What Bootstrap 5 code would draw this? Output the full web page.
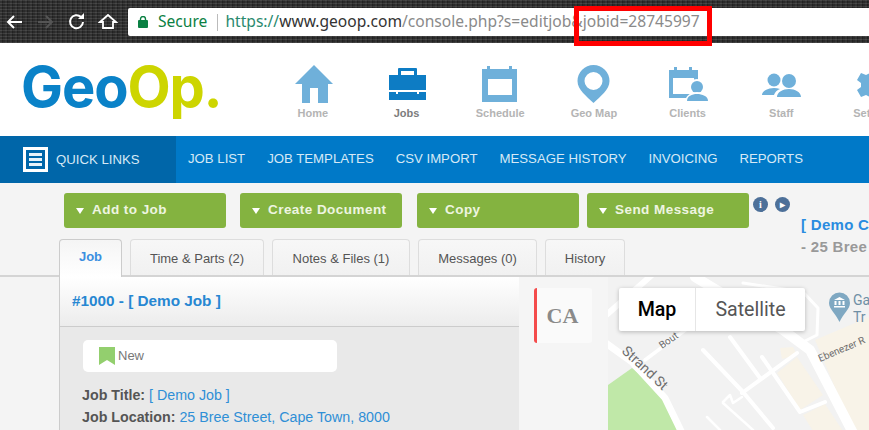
<!DOCTYPE html>
<html lang="en">
<head>
    <meta charset="UTF-8">
    <title>GeoOp - Job</title>
    <link href="https://cdn.jsdelivr.net/npm/bootstrap@5.3.0/dist/css/bootstrap.min.css" rel="stylesheet">
    <style>
        html, body { height: 430px; overflow: hidden; }
        body { font-family: "Liberation Sans", Arial, sans-serif; background: #f4f4f4; color: #555; }

        /* browser toolbar */
        .chrome-bar { height: 43px; padding: 8px 0 7px 0; background: repeating-linear-gradient(0deg, rgba(255,255,255,.07) 0 1px, rgba(0,0,0,.12) 1px 3px), repeating-linear-gradient(90deg, #3a3a3a 0 2px, #262626 2px 3px, #303030 3px 5px); position: relative; }
        .chrome-tools { width: 128px; flex: none; }
        .url-box { flex: 1; background: #fff; border-radius: 2px 0 0 2px; font-family: "Noto Sans", sans-serif; font-size: 15.6px; padding-left: 10px; white-space: nowrap; overflow: hidden; }
        .url-secure { color: #0b8043; margin-left: 10px; }
        .url-sep { width: 1px; height: 17px; background: #bbb; margin: 0 7px 0 10px; }
        .url-scheme { color: #2a8a6e; }
        .url-host { color: #333; }
        .url-rest { color: #8a8a8a; }
        .red-frame { position: absolute; left: 574px; top: 6px; width: 138px; height: 40px; border: 5px solid #f00; }

        /* logo + main icons */
        .app-head { height: 93px; background: #fff; overflow: hidden; }
        .logo-cell { width: 266px; flex: none; padding: 0 0 6px 21px; font-family: "Inter", sans-serif; font-weight: 700; font-size: 56px; letter-spacing: -1.1px; line-height: 1; }
        .logo-geo { color: #0a82c8; }
        .logo-op { color: #cdd500; }
        .head-item { width: 93.7px; flex: none; text-align: center; font-size: 11px; font-weight: 700; color: #b4b4b4; padding-top: 21px; }
        .head-item svg { display: block; margin: 0 auto -1px; height: 42px; width: 46px; fill: #6fb0da; }
        .head-item.on { color: #7c7c7c; }
        .head-item.on svg { fill: #0d7cc4; }

        /* blue nav */
        .blue-nav { height: 47px; background: #0079c8; font-size: 13.2px; color: #d6e9f6; }
        .quick-cell { width: 176px; flex: none; background: #0066a9; padding-left: 23px; gap: 8px; }
        .quick-box { width: 25px; height: 25px; border: 3px solid #fff; background: #0066a9; padding: 3px; display: flex; flex-direction: column; justify-content: space-between; }
        .quick-box i { display: block; height: 3px; background: #e8f2f9; }
        .blue-links { gap: 22px; padding: 0 0 1px 12px; }

        /* action buttons */
        .action-row { padding: 10px 0 0 64px; height: 56px; white-space: nowrap; }
        .act-btn { width: 162px; height: 35px; flex: none; background: #84b340; border: 0; border-radius: 3px; color: #eef5e0; font-weight: 700; font-size: 13.5px; letter-spacing: .45px; text-align: left; padding: 0 0 0 12px; display: flex; align-items: center; gap: 8px; }
        .act-btn::before { content: ""; border-left: 4px solid transparent; border-right: 4px solid transparent; border-top: 6px solid #fff; margin-top: 1px; }
        .gap-add { margin-right: 14px; }
        .gap-doc { margin-right: 15px; }
        .gap-copy { margin-right: 8px; }
        .round-ico { width: 15px; height: 15px; border-radius: 50%; background: #4d7099; color: #fff; font: bold 10px/15px "Liberation Serif", serif; text-align: center; }
        .round-row { gap: 7px; padding: 4px 0 0 4px; flex: none; }
        .demo-side { margin: 21px 0 0 11px; font-weight: 700; font-size: 15px; line-height: 22px; letter-spacing: .3px; }
        .demo-side div:first-child { color: #2a8ce0; }
        .demo-side div:last-child { color: #999; }

        /* tabs */
        .job-tabs { padding-left: 59px; gap: 8px; height: 38px; border-bottom: 2px solid #d4d4d4; font-size: 13px; }
        .job-tab { height: 36px; border: 1px solid #ddd; border-bottom: 0; border-radius: 4px 4px 0 0; background: linear-gradient(#f7f7f7, #f1f1f1); color: #555; padding: 0; text-align: center; line-height: 38px; flex: none; }
        .job-tab.on { height: 38px; margin-bottom: -2px; background: linear-gradient(#f5f5f5, #fff); border-color: #ccc; color: #3b8fe0; font-weight: 700; line-height: 34px; font-size: 13px; }
        .tab-w1 { width: 63px; }
        .tab-w2 { width: 134px; }
        .tab-w3 { width: 138px; }
        .tab-w4 { width: 119px; }
        .tab-w5 { width: 80px; }

        /* panels */
        .work-area { height: 154px; }
        .job-panel { margin-left: 59px; width: 460px; flex: none; border-left: 1px solid #ccc; background: #e9e9e9; overflow: hidden; }
        .job-title-bar { height: 50px; background: linear-gradient(#fff, #ececec); border-bottom: 1px solid #ccc; padding: 13px 0 0 12px; font-size: 15.3px; font-weight: 700; color: #2787d2; }
        .job-body { padding: 13px 0 0 22px; font-size: 14.25px; line-height: 22px; color: #555; white-space: nowrap; }
        .state-pill { width: 254px; height: 32px; background: #fff; border-radius: 5px; padding-left: 16px; gap: 3px; font-size: 13px; color: #777; margin: 0 0 12px 1px; }
        .state-flag { width: 16px; height: 18px; background: #93cf6e; clip-path: polygon(0 0, 100% 0, 100% 100%, 50% 72%, 0 100%); }
        .job-body a { color: #2f8fd6; text-decoration: none; }
        .map-side { width: 89px; flex: none; background: #f5f5f5; padding: 11px 0 0 15px; }
        .ca-card { width: 58px; height: 55px; background: #fafafa; border-left: 3px solid #f44b4b; border-radius: 3px; padding-right: 4px; font: bold 22px/55px "Liberation Serif", serif; color: #8a8a8a; text-align: center; }
        .map-wrap { flex: 1; position: relative; overflow: hidden; background: #f2f2f2; }
        .map-wrap svg { display: block; }
        .map-switch { position: absolute; left: 11px; top: 11px; height: 43px; background: #fff; border-radius: 2px; box-shadow: 0 1px 4px rgba(0,0,0,.25); font-family: Roboto, sans-serif; font-size: 19.6px; }
        .map-switch div { line-height: 43px; text-align: center; }
        .map-btn-a { width: 77px; color: #000; font-weight: 500; border-right: 1px solid #e6e6e6; }
        .map-btn-b { width: 109px; color: #565656; }
    </style>
</head>
<body>
    <!-- Browser toolbar -->
    <div class="chrome-bar d-flex">
        <div class="chrome-tools">
            <svg width="128" height="28" viewBox="0 0 128 28" fill="none" stroke="#fff" stroke-width="2">
                <path d="M22 14H9M14 8l-6 6 6 6"/>
                <path d="M38 14h13M46 8l6 6-6 6" stroke="#555"/>
                <path d="M83 14a6.5 6.5 0 1 1-2-5"/>
                <path d="M84 5v6h-6" fill="#fff" stroke="none"/>
                <path d="M100 14l8-7 8 7h-3v6h-10v-6z" stroke-width="1.8"/>
            </svg>
        </div>
        <div class="url-box d-flex align-items-center">
            <svg width="10" height="12" viewBox="0 0 10 12"><rect y="4" width="10" height="8" rx="1" fill="#0b8043"/><path d="M2.5 5V3a2.5 2.5 0 0 1 5 0v2" fill="none" stroke="#0b8043" stroke-width="1.4"/></svg>
            <span class="url-secure">Secure</span>
            <span class="url-sep"></span>
            <span><span class="url-scheme">https://</span><span class="url-host">www.geoop.com</span><span class="url-rest">/console.php?s=editjob&amp;jobid=28745997</span></span>
        </div>
        <div class="red-frame"></div>
    </div>

    <!-- Logo and main icons -->
    <div class="app-head d-flex">
        <div class="logo-cell d-flex align-items-center"><span class="logo-geo">Geo</span><span class="logo-op">Op.</span></div>
        <div class="head-item"><svg viewBox="0 0 46 42"><path d="M24 1 43 20H38V39H28V24H20V39H12V20H5z"/></svg>Home</div>
        <div class="head-item on"><svg viewBox="0 0 46 42"><path fill-rule="evenodd" d="M15 4h17a1 1 0 0 1 1 1v6h9v15H5V11h9V5a1 1 0 0 1 1-1zm2 3v4h13V7zM5 28h7v2h2v-2h19v2h2v-2h7v8H5z"/></svg>Jobs</div>
        <div class="head-item"><svg viewBox="0 0 46 42"><path fill-rule="evenodd" d="M5 5h5V2h3v3h19V2h3v3h5v33H5zm6 10v16h24V15z"/></svg>Schedule</div>
        <div class="head-item"><svg viewBox="0 0 46 42"><path fill-rule="evenodd" d="M22.500 1a16 16 0 0 1 16 16c0 9-9 15-16 22C15.500 32 6.500 26 6.500 17a16 16 0 0 1 16-16zm0 7a9 9 0 1 0 0 18 9 9 0 0 0 0-18z"/></svg>Geo Map</div>
        <div class="head-item"><svg viewBox="0 0 46 42"><path fill-rule="evenodd" d="M4 6h5V3h3v3h12V3h3v3h6v28H4zm4 8v16h21V14z"/><circle cx="32" cy="23" r="8" fill="#fff"/><circle cx="32" cy="23" r="6"/><path d="M20 38c0-6 6-10 12-10s12 4 12 10z" fill="#fff"/><path d="M22 37c0-5 5-7 10-7s11 2 11 7z"/></svg>Clients</div>
        <div class="head-item"><svg viewBox="0 0 46 42"><circle cx="16" cy="16" r="6.500"/><circle cx="31" cy="17" r="7"/><path d="M4 31c0-4 6-7 12-7 2 0 4 .3 6 1-3 1-5 3-6 6zM19 33c0-5 6-8 12-8s12 3 12 8z"/></svg>Staff</div>
        <div class="head-item"><svg viewBox="0 0 46 42"><path fill-rule="evenodd" d="M19 4h8l1 5 4 2 5-2 4 7-4 3v4l4 3-4 7-5-2-4 2-1 5h-8l-1-5-4-2-5 2-4-7 4-3v-4l-4-3 4-7 5 2 4-2zm4 11a6 6 0 1 0 0 12 6 6 0 0 0 0-12z"/></svg>Settings</div>
    </div>

    <!-- Blue navigation -->
    <div class="blue-nav d-flex">
        <div class="quick-cell d-flex align-items-center">
            <div class="quick-box"><i></i><i></i><i></i></div>
            <span>QUICK LINKS</span>
        </div>
        <div class="blue-links d-flex align-items-center">
            <span>JOB LIST</span>
            <span>JOB TEMPLATES</span>
            <span>CSV IMPORT</span>
            <span>MESSAGE HISTORY</span>
            <span>INVOICING</span>
            <span>REPORTS</span>
        </div>
    </div>

    <!-- Action buttons -->
    <div class="action-row d-flex">
        <button class="act-btn gap-add">Add to Job</button>
        <button class="act-btn gap-doc">Create Document</button>
        <button class="act-btn gap-copy">Copy</button>
        <button class="act-btn">Send Message</button>
        <div class="round-row d-flex">
            <div class="round-ico">i</div>
            <div class="round-ico">&#9656;</div>
        </div>
        <div class="demo-side">
            <div>[ Demo C</div>
            <div>- 25 Bree</div>
        </div>
    </div>

    <!-- Tabs -->
    <div class="job-tabs d-flex">
        <div class="job-tab on tab-w1">Job</div>
        <div class="job-tab tab-w2">Time &amp; Parts (2)</div>
        <div class="job-tab tab-w3">Notes &amp; Files (1)</div>
        <div class="job-tab tab-w4">Messages (0)</div>
        <div class="job-tab tab-w5">History</div>
    </div>

    <div class="work-area d-flex">
        <div class="job-panel">
            <div class="job-title-bar">#1000 - [ Demo Job ]</div>
            <div class="job-body">
                <div class="state-pill d-flex align-items-center"><span class="state-flag"></span>New</div>
                <div><b>Job Title:</b> <a href="#">[ Demo Job ]</a></div>
                <div><b>Job Location:</b> <a href="#">25 Bree Street, Cape Town, 8000</a></div>
            </div>
        </div>
        <div class="map-side"><div class="ca-card">CA</div></div>
        <div class="map-wrap">
            <svg width="261" height="154" viewBox="0 0 261 154">
                <polygon points="207,63 261,40 261,154 245,154" fill="#f8f3e8"/>
                <polygon points="169,96 189,80 215,118 192,133" fill="#f8f3e8"/>
                <polygon points="172,71 185,70 189,78 174,82" fill="#f8f3e8"/>
                <polygon points="195,138 217,127 235,154 205,154" fill="#f8f3e8"/>
                <polygon points="0,108 24,91 59,121 70,154 0,154" fill="#c0e8a8"/>
                <g fill="none" stroke="#fff" stroke-linecap="round" stroke-linejoin="round">
                    <path d="M-5 64 24 85 57 121 74 156" stroke-width="7"/>
                    <path d="M-5 41 45 -3" stroke-width="6"/>
                    <path d="M37 83 84 48" stroke-width="3.500"/>
                    <path d="M87 0 175 53 202 73 245 156" stroke-width="10"/>
                    <path d="M135 6 195 15 210 31 209 58 195 65" stroke-width="3"/>
                    <path d="M95 73 135 115 165 151 M122 60 152 101 M154 80 192 135 217 125" stroke-width="4"/>
                    <path d="M134 116 189 76" stroke-width="4"/>
                    <path d="M115 125 122 118 125 126 134 120 M115 126 145 153 M99 140 112 153" stroke-width="2.500"/>
                </g>
                <g font-family="Roboto, sans-serif" fill="#6d6d6d">
                    <text transform="translate(13,75) rotate(43)" font-size="14">Strand St</text>
                    <text transform="translate(54,72) rotate(-35)" font-size="10">Bout</text>
                    <text transform="translate(212,85) rotate(-23)" font-size="10">Ebenezer R</text>
                    <text x="245" y="28" font-size="14" fill="#6f8fa5">Ga</text>
                    <text x="245" y="45" font-size="14" fill="#6f8fa5">Tr</text>
                </g>
                <path d="M221 26a10.500 10.500 0 1 1 21 0c0 6-7 11-10.500 19-3.500-8-10.500-13-10.500-19z" fill="#7fa8c2"/>
                <path d="M226 23l5.500-3 5.500 3zM226.500 24h2v4h-2zM230.500 24h2v4h-2zM234.500 24h2v4h-2zM226 29h11v1.500h-11z" fill="#fff"/>
            </svg>
            <div class="map-switch d-flex">
                <div class="map-btn-a">Map</div>
                <div class="map-btn-b">Satellite</div>
            </div>
        </div>
    </div>

    <script src="https://cdn.jsdelivr.net/npm/bootstrap@5.3.0/dist/js/bootstrap.bundle.min.js"></script>
</body>
</html>
